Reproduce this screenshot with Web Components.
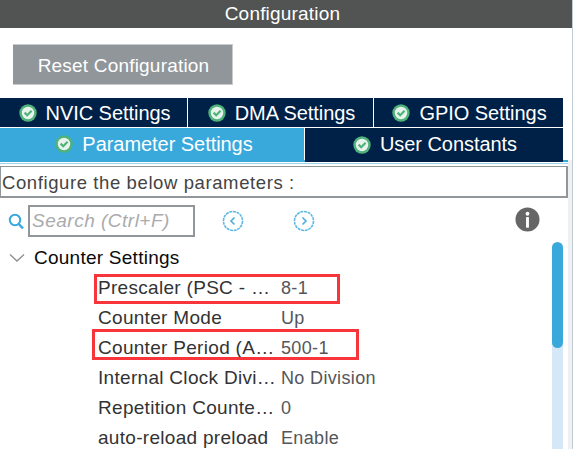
<!DOCTYPE html>
<html><head><meta charset="utf-8"><style>
html,body{margin:0;padding:0;background:#fff;overflow:hidden}
body{width:573px;height:449px;font-family:"Liberation Sans",Arial,sans-serif}
</style></head><body>
<config-panel></config-panel>
<script>
const ok=`<svg width="18" height="18" viewBox="0 0 18 18"><circle cx="9" cy="9" r="8.7" fill="#4fb27a"/><circle cx="9" cy="9" r="6.2" fill="#e8f3ec"/><path d="M5.6 8.6 8.2 11.2 12.6 6.8" fill="none" stroke="#4fb27a" stroke-width="2.2"/></svg>`;
class TabCell extends HTMLElement{
 constructor(){super();const s=this.attachShadow({mode:'open'});
 s.innerHTML=`<style>:host{display:flex;align-items:center;justify-content:center;gap:9px;background:#002147;color:#fff;font-size:20px;letter-spacing:-.05px;height:100%;box-sizing:border-box;padding-left:2px}
 :host([active]){background:#39a9dc;height:34px;padding:0 0 2px 4px}svg{display:block;flex:none}</style>${ok}<slot></slot>`}
}
customElements.define('tab-cell',TabCell);
class ParamRow extends HTMLElement{
 constructor(){super();const s=this.attachShadow({mode:'open'});
 s.innerHTML=`<style>:host{display:grid;grid-template-columns:183px 1fr;height:30px;align-items:center;padding-left:98px;font-size:19px;color:#333;letter-spacing:.3px}
 .v{color:#54565a;font-size:18px;letter-spacing:.35px}.n{white-space:nowrap}</style><div class="n"><slot name="n"></slot></div><div class="v"><slot name="v"></slot></div>`}
}
customElements.define('param-row',ParamRow);
class ConfigPanel extends HTMLElement{
 constructor(){super();const s=this.attachShadow({mode:'open'});
 s.innerHTML=`<style>
 :host{display:block;position:relative;width:573px;height:449px;overflow:hidden;background:#fff}
 .head{height:28px;background:#515453;color:#fff;font-size:19px;display:flex;align-items:center;justify-content:center;letter-spacing:.2px;margin-right:1px;padding-right:7px;box-sizing:border-box}
 .btn{margin:16px 0 0 13px;width:220px;height:41px;box-sizing:border-box;background:#90969a;border-right:1px solid #c8cacc;border-bottom:1px solid #c8cacc;border-top:1px solid #c8cacc;color:#fff;font-size:19px;display:flex;align-items:center;justify-content:center;letter-spacing:.2px;padding:2px 0 0 2px}
 .tabs{margin-top:13px;width:563px}
 .r1{display:grid;grid-template-columns:187px 185px 189px;column-gap:1px;height:29px}
 .r1 tab-cell{padding-top:1px}
 .r2{display:grid;grid-template-columns:304px 258px;column-gap:1px;height:32px;margin-top:1px}
 .r2 tab-cell:not([active]){padding-bottom:1px}
 .line{height:2px;background:#39a9dc;width:568px}
 .line2{height:1px;background:#9fd3ec;width:568px;margin-top:1px}
 .desc{margin-top:2px;width:568px;height:32px;box-sizing:border-box;border:1px solid #90969a;border-right-width:2px;border-bottom-width:2px;font-size:18.5px;color:#444;display:flex;align-items:center;padding-left:1px;padding-top:2px;letter-spacing:.6px}
 .tools{display:flex;align-items:center;height:33px;margin-top:6px;padding-bottom:3px;position:relative}
 .mag{margin-left:8px;flex:none;display:block}
 .search{margin-left:4px;width:167px;height:32px;box-sizing:border-box;border:2px solid #90969a;font-style:italic;font-size:19px;color:#a9abad;display:flex;align-items:center;padding-left:2px;letter-spacing:.5px;padding-top:1px}
 .nav{flex:none;display:block}
 .tree{display:flex;align-items:center;height:30px;margin-top:3px;font-size:19px;color:#0a0a0a;letter-spacing:.25px}
 .tree svg{margin:0 9px 0 9px;display:block}
 .track{position:absolute;left:552px;top:250px;width:11px;height:199px;background:#d5e8f7}
 .thumb{position:absolute;left:552px;top:242px;width:11px;height:106px;border-radius:6px;background:#39a9dc}
 .rail{position:absolute;left:568px;top:160px;width:4px;height:289px;background:#eef0f1}
 .edge{position:absolute;left:572px;top:0;width:1px;height:449px;background:#c2ccd4}
 .mark{position:absolute;border:3px solid #f9353c;box-sizing:border-box}
 </style>
 <div class="rail"></div><div class="edge"></div>
 <div class="head">Configuration</div>
 <div class="btn">Reset Configuration</div>
 <div class="tabs">
  <div class="r1"><tab-cell>NVIC Settings</tab-cell><tab-cell>DMA Settings</tab-cell><tab-cell>GPIO Settings</tab-cell></div>
  <div class="r2"><tab-cell active>Parameter Settings</tab-cell><tab-cell>User Constants</tab-cell></div>
 </div>
 <div class="line"></div><div class="line2"></div>
 <div class="desc">Configure the below parameters :</div>
 <div class="tools">
  <svg class="mag" width="16" height="20" viewBox="0 0 16 20"><circle cx="7" cy="9" r="5.2" fill="none" stroke="#39a9dc" stroke-width="2"/><path d="M10.8 13 15 17.5" stroke="#39a9dc" stroke-width="2.4"/></svg>
  <div class="search">Search (Ctrl+F)</div>
  <svg class="nav" style="margin-left:27px" width="22" height="22" viewBox="0 0 22 22"><circle cx="11" cy="11" r="9.5" fill="none" stroke="#5cb8e4" stroke-width="1.6" stroke-dasharray="3 .7"/><path d="M12.5 7.5 9 11l3.5 3.5" fill="none" stroke="#4aaede" stroke-width="1.6"/></svg>
  <svg class="nav" style="margin-left:49px" width="22" height="22" viewBox="0 0 22 22"><circle cx="11" cy="11" r="9.5" fill="none" stroke="#5cb8e4" stroke-width="1.6" stroke-dasharray="3 .7"/><path d="M9.5 7.5 13 11l-3.5 3.5" fill="none" stroke="#4aaede" stroke-width="1.6"/></svg>
  <svg class="nav" style="margin-left:200px;margin-bottom:2px" width="25" height="25" viewBox="0 0 26 26"><circle cx="13" cy="13" r="12.5" fill="#666"/><circle cx="13" cy="7" r="2" fill="#fff"/><rect x="11.5" y="10.5" width="3" height="11" fill="#fff"/></svg>
 </div>
 <div class="tree"><svg width="16" height="10" viewBox="0 0 16 10"><path d="M1 1.5 8 8 15 1.5" fill="none" stroke="#8a8f93" stroke-width="1.3"/></svg>Counter Settings</div>
 <div class="rows">
  <param-row><span slot="n">Prescaler (PSC - …</span><span slot="v">8-1</span></param-row>
  <param-row><span slot="n">Counter Mode</span><span slot="v">Up</span></param-row>
  <param-row><span slot="n">Counter Period (A…</span><span slot="v">500-1</span></param-row>
  <param-row><span slot="n">Internal Clock Divi…</span><span slot="v">No Division</span></param-row>
  <param-row><span slot="n">Repetition Counte…</span><span slot="v">0</span></param-row>
  <param-row><span slot="n">auto-reload preload</span><span slot="v">Enable</span></param-row>
 </div>
 <div class="track"></div><div class="thumb"></div>
 <div class="mark" style="left:94px;top:274px;width:246px;height:30px"></div>
 <div class="mark" style="left:92px;top:329px;width:267px;height:31px"></div>`;
 }
}
customElements.define('config-panel',ConfigPanel);
</script>
</body></html>
